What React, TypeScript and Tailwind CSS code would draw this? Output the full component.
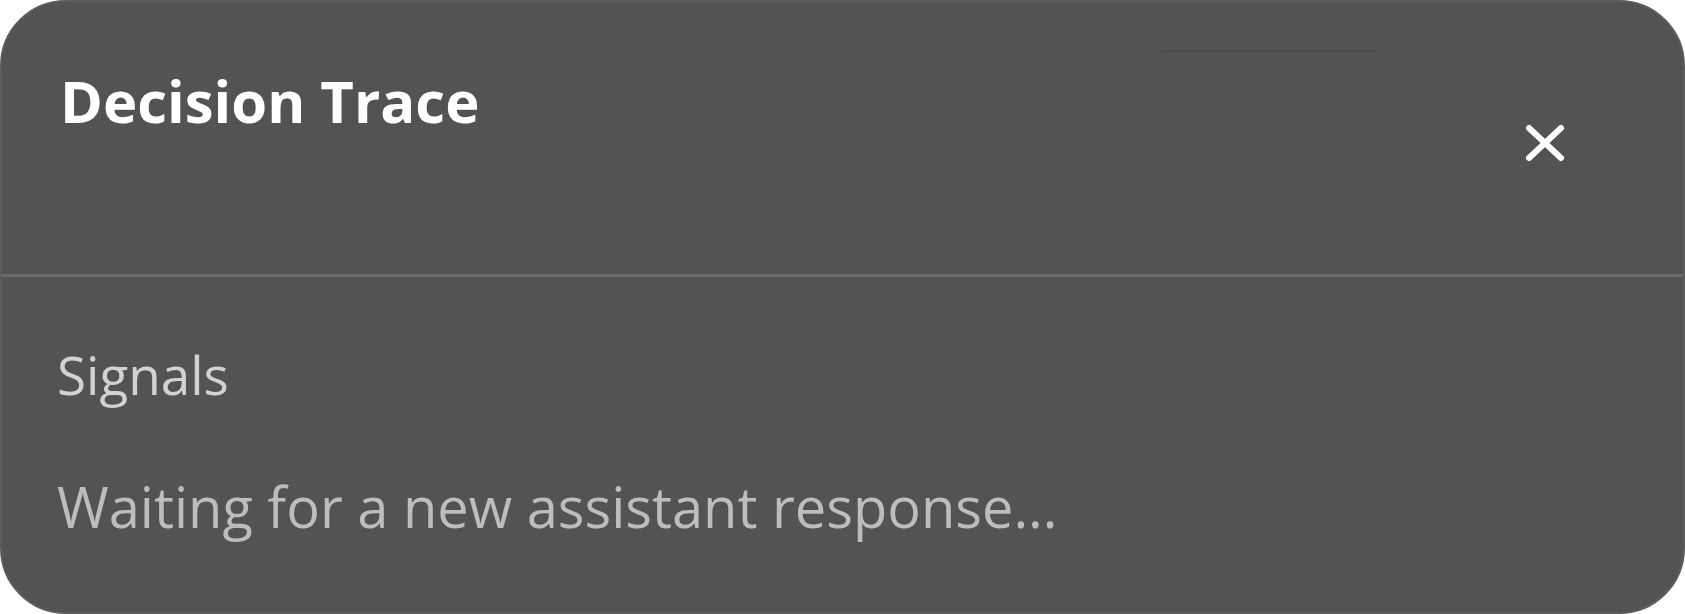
import React from 'react';

const CloseIcon: React.FC = () => (
  <svg width="44" height="40" viewBox="0 0 44 40" fill="none" stroke="currentColor" strokeWidth="6" strokeLinecap="round">
    <line x1="6" y1="5" x2="38" y2="35" />
    <line x1="38" y1="5" x2="6" y2="35" />
  </svg>
);

const App: React.FC = () => {
  return (
    <div className="w-[1685px] h-[614px] bg-white" style={{ fontFamily: '"Open Sans", "Noto Sans", sans-serif' }}>
      <div className="relative h-full rounded-[66px] bg-[#535353] border-2 border-[#5c5c5c] flex flex-col overflow-hidden">
        {/* faint underline artifact near the top */}
        <div className="absolute left-[1160px] top-[48px] w-[214px] h-[2px] bg-[#4b4b4b]" />
        <div className="h-[275px] flex justify-between pl-[58px] pr-[116px] border-b-[3px] border-[#696969]">
          <h1 className="pt-[70px] text-[58px] font-bold leading-none text-white">Decision Trace</h1>
          <button className="mt-[121px] h-[40px] text-white">
            <CloseIcon />
          </button>
        </div>
        <div className="pl-[55px] flex flex-col">
          <div className="mt-[71px] text-[53px] leading-none text-[#d2d2d2]">Signals</div>
          <div className="mt-[77px] text-[56px] leading-none text-[#bdbdbd]">Waiting for a new assistant response...</div>
        </div>
      </div>
    </div>
  );
};

export default App;
